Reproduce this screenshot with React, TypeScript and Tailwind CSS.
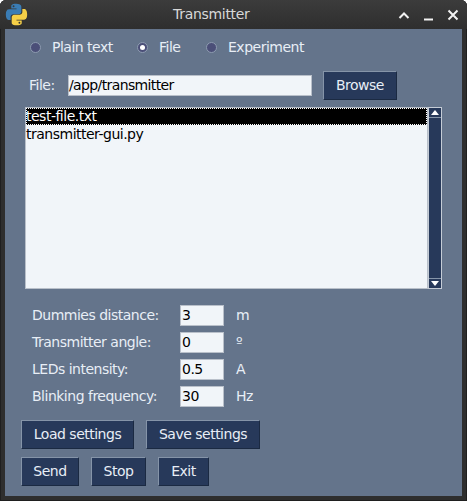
const font = "font-['DejaVu_Sans',sans-serif]";

function PythonLogo() {
    return (
        <svg width="23" height="23" viewBox="0 0 110 110" className="shrink-0">
            <path
                fill="#3a7cb4"
                d="M54 3C28 3 30 14 30 14v12h25v4H20S4 28 4 55s14 26 14 26h9V68s-1-14 14-14h24s13 0 13-13V17S80 3 54 3zM41 11a4.500 4.500 0 1 1 0 9 4.500 4.500 0 0 1 0-9z"
            />
            <path
                fill="#f5cf47"
                d="M56 107c26 0 24-11 24-11V84H55v-4h35s16 2 16-25-14-26-14-26h-9v13s1 14-14 14H45S32 56 32 69v24s-2 14 24 14zm13-8a4.500 4.500 0 1 1 0-9 4.500 4.500 0 0 1 0 9z"
            />
        </svg>
    );
}

function WindowControls() {
    return (
        <div className="flex items-center gap-[13px] text-[#f2f2f2]">
            <svg width="12" height="12" viewBox="0 0 12 12">
                <path d="M1.500 9 6 4.500 10.500 9" fill="none" stroke="currentColor" strokeWidth="2" />
            </svg>
            <svg width="11" height="12" viewBox="0 0 11 12">
                <path d="M1 10.500h9" fill="none" stroke="currentColor" strokeWidth="2" />
            </svg>
            <svg width="12" height="12" viewBox="0 0 12 12">
                <path d="M1.500 1.500l9 9M10.500 1.500l-9 9" fill="none" stroke="currentColor" strokeWidth="2" />
            </svg>
        </div>
    );
}

function Radio({ label, checked, className }: { label: string; checked?: boolean; className: string }) {
    return (
        <div className={`flex items-center ${className}`}>
            <span className="flex h-[11px] w-[11px] items-center justify-center rounded-full border border-[#8d9bb0] bg-[#4b4f78]">
                {checked && <span className="h-[5px] w-[5px] rounded-full bg-white" />}
            </span>
            <span className="ml-[11px] text-[#e8eef6]">{label}</span>
        </div>
    );
}

function TkButton({ label, className }: { label: string; className: string }) {
    return (
        <button className={`flex h-[29px] items-center justify-center border border-t-[#8594a8] border-l-[#8594a8] border-r-[#1b2a42] border-b-[#1b2a42] bg-[#27395a] text-[#e8eef6] ${className}`}>
            {label}
        </button>
    );
}

function ParamRow({ label, value, unit }: { label: string; value: string; unit: string }) {
    return (
        <div className="flex h-[21px] items-center">
            <span className="w-[148px] text-[#e8eef6]">{label}</span>
            <div className="h-[21px] w-[44px] border border-[#b9c0ca] bg-[#f1f5f9] pl-[1px] leading-[19px] text-black">
                {value}
            </div>
            <span className="ml-[12px] text-[#e8eef6]">{unit}</span>
        </div>
    );
}

export default function App() {
    return (
        <div className={`flex h-[501px] w-[467px] flex-col overflow-hidden rounded-t-[6px] bg-[#2e2e2e] text-[14px] leading-[17px] tracking-[-0.5px] shadow-[inset_0_0_0_1px_#1f1f1f] ${font}`}>
            <div className="flex h-[29px] shrink-0 items-center bg-gradient-to-b from-[#3c3c3c] to-[#2e2e2e] pl-[5px] pr-[8px]">
                <PythonLogo />
                <span className="ml-[145px] flex-1 tracking-[-0.3px] text-[#d8d8d8]">Transmitter</span>
                <WindowControls />
            </div>
            <div className="mx-[5px] mb-[5px] flex flex-1 flex-col bg-[#64748b] pl-[16px]">
                <div className="mt-[10px] flex h-[17px] items-center pl-[9px]">
                    <Radio label="Plain text" className="w-[107px]" />
                    <Radio label="File" className="w-[69px]" checked />
                    <Radio label="Experiment" className="w-[120px]" />
                </div>
                <div className="mt-[15px] flex h-[29px] items-center pl-[8px]">
                    <span className="w-[39px] text-[#e8eef6]">File:</span>
                    <div className="h-[21px] w-[244px] border border-[#b9c0ca] bg-[#f1f5f9] leading-[19px] tracking-[-0.62px] text-black">
                        /app/transmitter
                    </div>
                    <TkButton label="Browse" className="ml-[11px] w-[74px]" />
                </div>
                <div className="mt-[7px] ml-[4px] flex h-[182px]">
                    <div className="w-[403px] border border-[#b9c0ca] bg-[#f1f5f9] text-black">
                        <div className="h-[17px] border border-dotted border-white bg-black leading-[15px] text-white">
                            <span className="-ml-px block">test-file.txt</span>
                        </div>
                        <div className="h-[18px] leading-[18px]">transmitter-gui.py</div>
                    </div>
                    <div className="flex w-[14px] flex-col border border-[#c5ccd6] bg-[#27395a]">
                        <div className="flex h-[10px] items-center justify-center border-b border-[#8594a8]">
                            <span className="h-0 w-0 border-x-[4px] border-b-[5px] border-x-transparent border-b-white" />
                        </div>
                        <div className="flex-1" />
                        <div className="flex h-[10px] items-center justify-center border-t border-[#8594a8]">
                            <span className="h-0 w-0 border-x-[4px] border-t-[5px] border-x-transparent border-t-white" />
                        </div>
                    </div>
                </div>
                <div className="mt-[16px] flex flex-col gap-[6px] pl-[11px]">
                    <ParamRow label="Dummies distance:" value="3" unit="m" />
                    <ParamRow label="Transmitter angle:" value="0" unit="º" />
                    <ParamRow label="LEDs intensity:" value="0.5" unit="A" />
                    <ParamRow label="Blinking frequency:" value="30" unit="Hz" />
                </div>
                <div className="mt-[13px] flex gap-[12px]">
                    <TkButton label="Load settings" className="w-[113px]" />
                    <TkButton label="Save settings" className="w-[114px]" />
                </div>
                <div className="mt-[8px] flex gap-[12px]">
                    <TkButton label="Send" className="w-[58px]" />
                    <TkButton label="Stop" className="w-[55px]" />
                    <TkButton label="Exit" className="w-[51px]" />
                </div>
            </div>
        </div>
    );
}
